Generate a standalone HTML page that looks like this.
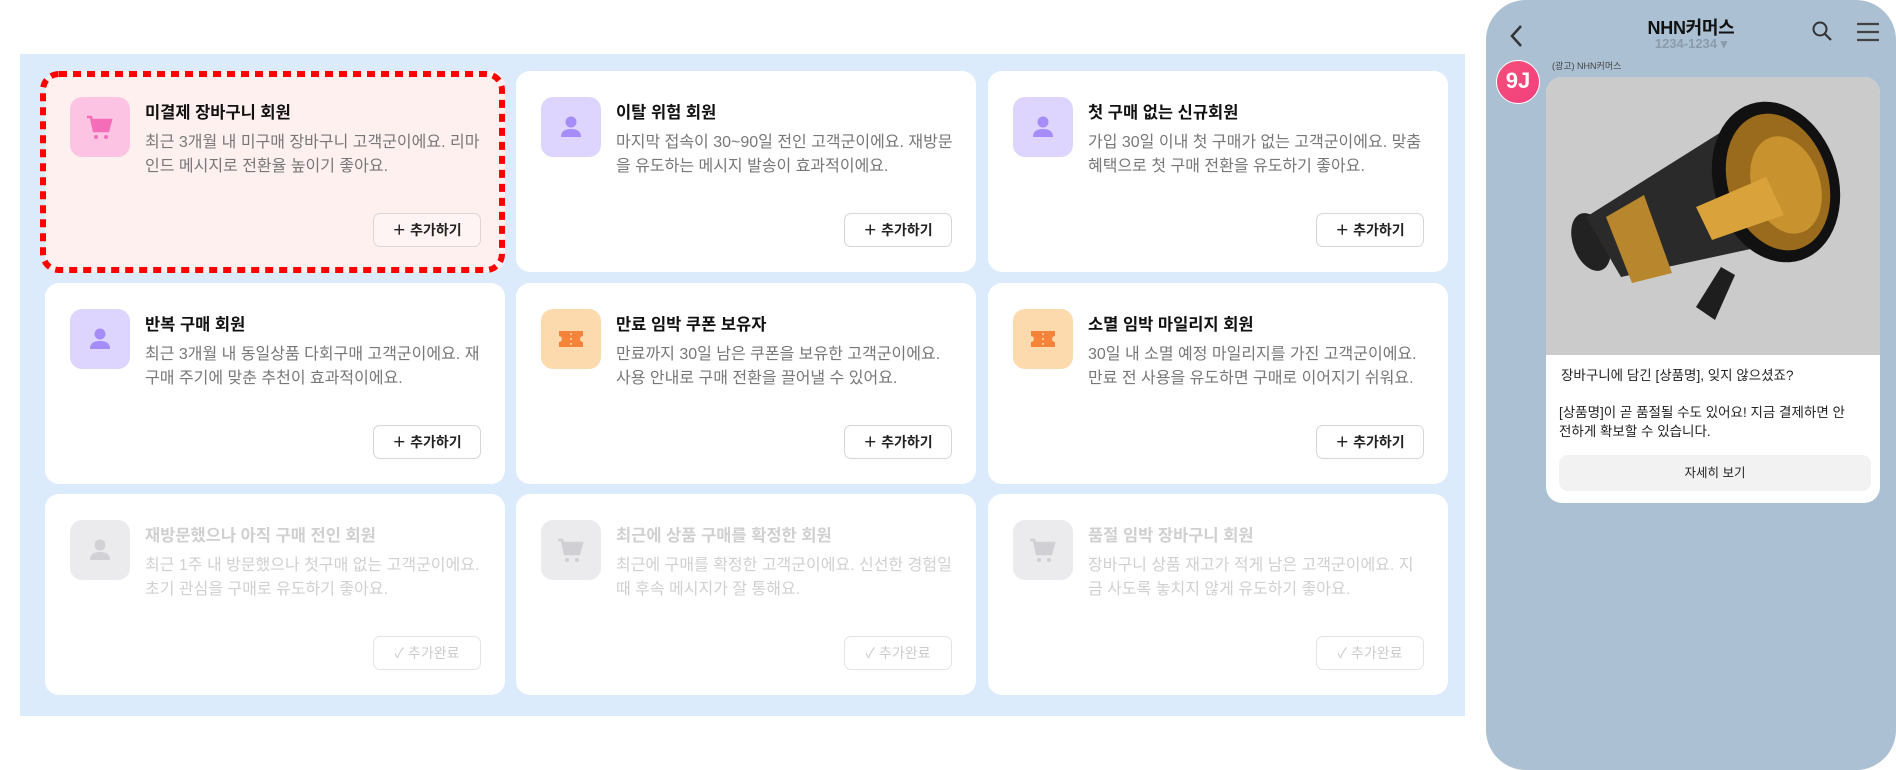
<!DOCTYPE html>
<html><head><meta charset="utf-8"><style>
*{box-sizing:border-box;margin:0;padding:0}
body{width:1896px;height:770px;background:#fff;position:relative;overflow:hidden;font-family:"Liberation Sans","Noto Sans CJK KR",sans-serif}
.panel{position:absolute;left:20px;top:54px;width:1445px;height:662px;background:#dcebfc}
.card{position:absolute;width:460px;height:201px;background:#fff;border-radius:14px}
.card.sel{background:#fff0f0}
.ic{position:absolute;left:25px;top:26px;width:60px;height:60px;border-radius:12px;display:flex;align-items:center;justify-content:center}
.t{position:absolute;left:100px;top:28px;font-size:16.5px;font-weight:bold;color:#111}
.d{position:absolute;left:100px;top:60px;width:338px;font-size:16px;line-height:23.5px;color:#777;word-break:break-all}
.b{position:absolute;right:24px;bottom:25px;width:108px;height:34px;border:1.5px solid #d6d6d6;border-radius:7px;font-size:14px;font-weight:bold;color:#222;display:flex;align-items:center;justify-content:center;gap:6px;background:#fff}
.sel .b{border-color:#ddd6d6;background:#fff4f4}
.dis .t,.dis .d{color:#d0d0d0}
.dis .b{color:#ccc;border-color:#e4e4e4;font-weight:normal}
.phone{position:absolute;left:1486px;top:0;width:410px;height:770px;background:#abc0d2;border-radius:40px}
</style></head><body>
<div class="panel"></div>

<div class="card sel" style="left:45px;top:71px">
<svg style="position:absolute;left:-5px;top:0" width="465" height="202"><rect x="3" y="3" width="459" height="196" rx="16" fill="none" stroke="#f00" stroke-width="6" stroke-dasharray="8 6"/></svg>
<div class="ic" style="background:#fcc3e2"><svg width="30" height="30" viewBox="0 0 30 30"><path d="M2 5h4l3 14h14l3-11H7" fill="none" stroke="#f36db8" stroke-width="2.5"/><path d="M8 8h18l-3 11H10z" fill="#f36db8"/><circle cx="11" cy="25" r="2" fill="#f36db8"/><circle cx="21" cy="25" r="2" fill="#f36db8"/></svg></div>
<div class="t">미결제 장바구니 회원</div>
<div class="d">최근 3개월 내 미구매 장바구니 고객군이에요. 리마인드 메시지로 전환율 높이기 좋아요.</div>
<div class="b">＋ 추가하기</div></div>

<div class="card" style="left:516px;top:71px">
<div class="ic" style="background:#ddd5fd"><svg width="30" height="30" viewBox="0 0 30 30"><circle cx="15" cy="10" r="5.5" fill="#a58cf8"/><path d="M5 25c0-6 4-8 10-8s10 2 10 8z" fill="#a58cf8"/></svg></div>
<div class="t">이탈 위험 회원</div>
<div class="d">마지막 접속이 30~90일 전인 고객군이에요. 재방문을 유도하는 메시지 발송이 효과적이에요.</div>
<div class="b">＋ 추가하기</div></div>

<div class="card" style="left:988px;top:71px">
<div class="ic" style="background:#ddd5fd"><svg width="30" height="30" viewBox="0 0 30 30"><circle cx="15" cy="10" r="5.5" fill="#a58cf8"/><path d="M5 25c0-6 4-8 10-8s10 2 10 8z" fill="#a58cf8"/></svg></div>
<div class="t">첫 구매 없는 신규회원</div>
<div class="d">가입 30일 이내 첫 구매가 없는 고객군이에요. 맞춤 혜택으로 첫 구매 전환을 유도하기 좋아요.</div>
<div class="b">＋ 추가하기</div></div>

<div class="card" style="left:45px;top:283px">
<div class="ic" style="background:#ddd5fd"><svg width="30" height="30" viewBox="0 0 30 30"><circle cx="15" cy="10" r="5.5" fill="#a58cf8"/><path d="M5 25c0-6 4-8 10-8s10 2 10 8z" fill="#a58cf8"/></svg></div>
<div class="t">반복 구매 회원</div>
<div class="d">최근 3개월 내 동일상품 다회구매 고객군이에요. 재구매 주기에 맞춘 추천이 효과적이에요.</div>
<div class="b">＋ 추가하기</div></div>

<div class="card" style="left:516px;top:283px">
<div class="ic" style="background:#fcdaae"><svg width="30" height="30" viewBox="0 0 30 30"><path d="M3 7h24v5a3 3 0 0 0 0 6v5H3v-5a3 3 0 0 0 0-6z" fill="#f5843a"/><path d="M15 9v2M15 14v2M15 19v2" stroke="#fcdaae" stroke-width="1.6"/></svg></div>
<div class="t">만료 임박 쿠폰 보유자</div>
<div class="d">만료까지 30일 남은 쿠폰을 보유한 고객군이에요. 사용 안내로 구매 전환을 끌어낼 수 있어요.</div>
<div class="b">＋ 추가하기</div></div>

<div class="card" style="left:988px;top:283px">
<div class="ic" style="background:#fcdaae"><svg width="30" height="30" viewBox="0 0 30 30"><path d="M3 7h24v5a3 3 0 0 0 0 6v5H3v-5a3 3 0 0 0 0-6z" fill="#f5843a"/><path d="M15 9v2M15 14v2M15 19v2" stroke="#fcdaae" stroke-width="1.6"/></svg></div>
<div class="t">소멸 임박 마일리지 회원</div>
<div class="d">30일 내 소멸 예정 마일리지를 가진 고객군이에요. 만료 전 사용을 유도하면 구매로 이어지기 쉬워요.</div>
<div class="b">＋ 추가하기</div></div>

<div class="card dis" style="left:45px;top:494px">
<div class="ic" style="background:#ebebee"><svg width="30" height="30" viewBox="0 0 30 30"><circle cx="15" cy="10" r="5.5" fill="#d2d2d6"/><path d="M5 25c0-6 4-8 10-8s10 2 10 8z" fill="#d2d2d6"/></svg></div>
<div class="t">재방문했으나 아직 구매 전인 회원</div>
<div class="d">최근 1주 내 방문했으나 첫구매 없는 고객군이에요. 초기 관심을 구매로 유도하기 좋아요.</div>
<div class="b">✓ 추가완료</div></div>

<div class="card dis" style="left:516px;top:494px">
<div class="ic" style="background:#ebebee"><svg width="30" height="30" viewBox="0 0 30 30"><path d="M2 5h4l3 14h14l3-11H7" fill="none" stroke="#d0d0d4" stroke-width="2.5"/><path d="M8 8h18l-3 11H10z" fill="#d0d0d4"/><circle cx="11" cy="25" r="2" fill="#d0d0d4"/><circle cx="21" cy="25" r="2" fill="#d0d0d4"/></svg></div>
<div class="t">최근에 상품 구매를 확정한 회원</div>
<div class="d">최근에 구매를 확정한 고객군이에요. 신선한 경험일 때 후속 메시지가 잘 통해요.</div>
<div class="b">✓ 추가완료</div></div>

<div class="card dis" style="left:988px;top:494px">
<div class="ic" style="background:#ebebee"><svg width="30" height="30" viewBox="0 0 30 30"><path d="M2 5h4l3 14h14l3-11H7" fill="none" stroke="#d0d0d4" stroke-width="2.5"/><path d="M8 8h18l-3 11H10z" fill="#d0d0d4"/><circle cx="11" cy="25" r="2" fill="#d0d0d4"/><circle cx="21" cy="25" r="2" fill="#d0d0d4"/></svg></div>
<div class="t">품절 임박 장바구니 회원</div>
<div class="d">장바구니 상품 재고가 적게 남은 고객군이에요. 지금 사도록 놓치지 않게 유도하기 좋아요.</div>
<div class="b">✓ 추가완료</div></div>

<div class="phone">
<svg style="position:absolute;left:22px;top:23px" width="16" height="26" viewBox="0 0 16 26"><path d="M13 3L4 13l9 10" fill="none" stroke="#333" stroke-width="2.5"/></svg>
<div style="position:absolute;left:0;width:100%;top:14px;text-align:center;font-size:18px;font-weight:bold;color:#111;letter-spacing:-0.3px">NHN커머스</div>
<div style="position:absolute;left:0;width:100%;top:36px;text-align:center;font-size:13px;font-weight:bold;color:#8a9bab">1234-1234 ▾</div>
<svg style="position:absolute;left:325px;top:20px" width="22" height="22" viewBox="0 0 22 22"><circle cx="9" cy="9" r="6.5" fill="none" stroke="#333" stroke-width="2"/><path d="M14 14l6 6" stroke="#333" stroke-width="2.2"/></svg>
<svg style="position:absolute;left:370px;top:22px" width="24" height="20" viewBox="0 0 24 20"><path d="M1 2h22M1 10h22M1 18h22" stroke="#444" stroke-width="2.2"/></svg>
<div style="position:absolute;left:10px;top:60px;width:44px;height:44px;border-radius:50%;background:linear-gradient(135deg,#f54e7a,#f2407f);border:1.5px solid #fff;color:#fff;font-weight:bold;font-size:22px;text-align:center;line-height:40px">9J</div>
<div style="position:absolute;left:66px;top:59px;font-size:9px;color:#444">(광고) NHN커머스</div>
<div style="position:absolute;left:60px;top:77px;width:334px;height:426px;background:#fff;border-radius:16px;overflow:hidden">
<div style="height:278px;background:#cbcbcb;position:relative">
<svg width="334" height="278" viewBox="0 0 334 278">
<path d="M150 230l25-40 14 8-20 45z" fill="#1e1e1e"/>
<ellipse cx="45" cy="165" rx="18" ry="30" fill="#222" transform="rotate(-20 45 165)"/>
<path d="M40 140l175-110 45 130-185 40z" fill="#2a2a2a"/>
<path d="M60 140l38-22 28 78-40 10z" fill="#b8862c"/>
<ellipse cx="230" cy="105" rx="62" ry="82" fill="#111" transform="rotate(-18 230 105)"/>
<ellipse cx="232" cy="105" rx="50" ry="70" fill="#9a6b1c" transform="rotate(-18 232 105)"/>
<ellipse cx="240" cy="108" rx="34" ry="50" fill="#c8922e" transform="rotate(-18 240 108)"/>
<path d="M150 130l70-30 18 38-72 25z" fill="#d9a23a"/>
</svg></div>
<div style="position:absolute;left:15px;top:289px;font-size:13.5px;color:#222;line-height:19px">장바구니에 담긴 [상품명], 잊지 않으셨죠?</div>
<div style="position:absolute;left:13px;top:326px;width:298px;font-size:13.5px;color:#222;line-height:19px;word-break:break-all">[상품명]이 곧 품절될 수도 있어요! 지금 결제하면 안전하게 확보할 수 있습니다.</div>
<div style="position:absolute;left:13px;top:378px;width:312px;height:36px;background:#f2f2f2;border-radius:9px;text-align:center;line-height:36px;font-size:12.5px;color:#222">자세히 보기</div>
</div>
</div>
</body></html>
